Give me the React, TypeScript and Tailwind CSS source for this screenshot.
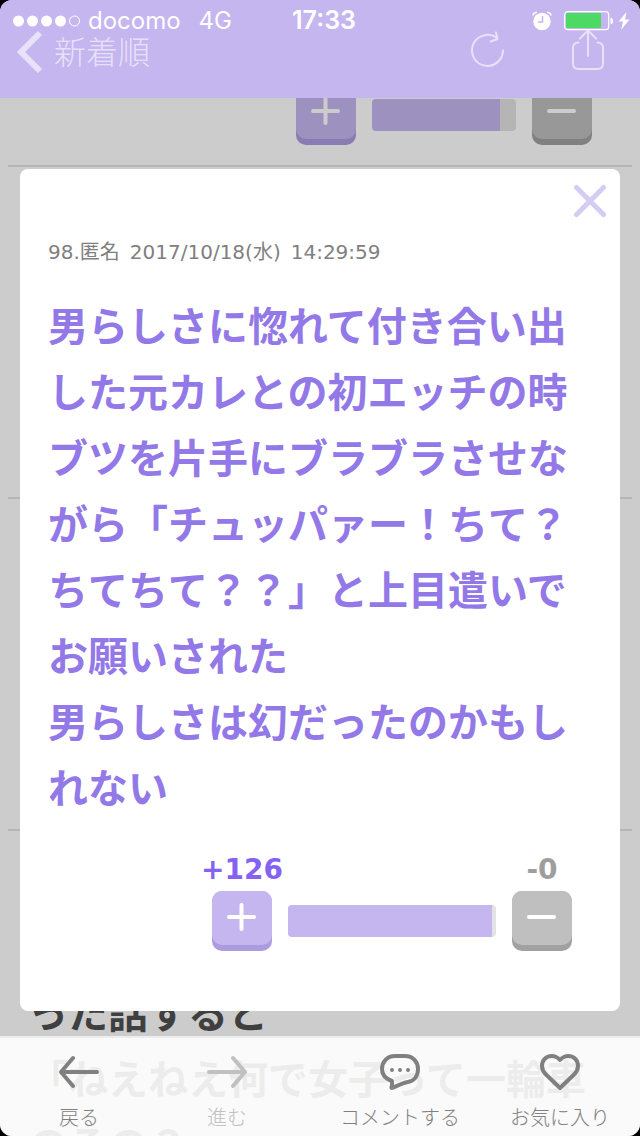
import type { ReactNode } from 'react';

function VoteButton({ kind }: { kind: 'plus' | 'minus' }) {
  const plus = kind === 'plus';
  return (
    <button
      type="button"
      aria-label={plus ? 'プラス' : 'マイナス'}
      className={`flex size-[60px] shrink-0 flex-col rounded-[10px] pb-1.5 ${plus ? 'bg-[#ac9bdf]' : 'bg-[#a1a1a1]'}`}
    >
      <span
        className={`flex w-full flex-1 items-center justify-center rounded-[10px] ${plus ? 'bg-[#c5b6f0]' : 'bg-[#bfbfbf]'}`}
      >
        <svg width="30" height="30" viewBox="0 0 30 30" fill="none" stroke="white" strokeWidth="4" strokeLinecap="round">
          <path d="M2 14H27" />
          {plus && <path d="M14.500 2V26" />}
        </svg>
      </span>
    </button>
  );
}

function VoteBar({ percent }: { percent: number }) {
  return (
    <div className="h-8 flex-1 overflow-hidden rounded bg-[#e3e3e3]">
      <div className="h-full bg-[#c5b6f0]" style={{ width: `${percent}%` }} />
    </div>
  );
}

function VoteRow({ percent }: { percent: number }) {
  return (
    <div className="flex items-center gap-4">
      <VoteButton kind="plus" />
      <VoteBar percent={percent} />
      <VoteButton kind="minus" />
    </div>
  );
}

function StatusBar() {
  return (
    <div className="grid h-10 grid-cols-[1fr_auto_1fr] items-center px-2.5 pt-0.5 text-2xl text-white">
      <div className="flex items-center gap-2 pl-0.5">
        <svg width="68" height="12" viewBox="0 0 68 12" fill="white">
          <circle cx="6.5" cy="6" r="5.5" />
          <circle cx="20.5" cy="6" r="5.5" />
          <circle cx="34.5" cy="6" r="5.5" />
          <circle cx="48.5" cy="6" r="5.5" />
          <circle cx="62.5" cy="6" r="5" fill="none" stroke="white" />
        </svg>
        <span>docomo</span>
        <span className="ml-2.5">4G</span>
      </div>
      <span className="pl-2 text-[25px] font-semibold">17:33</span>
      <div className="flex items-center justify-end gap-1">
        <svg className="mr-2" width="20" height="20" viewBox="0 0 20 20">
          <circle cx="10" cy="10.500" r="8.7" fill="white" />
          <path d="M1 4.500C1 2.500 3 1 5 1.500M19 4.500C19 2.500 17 1 15 1.500" fill="none" stroke="white" strokeWidth="1.500" />
          <path d="M10.500 5V11H6" fill="none" stroke="#c5b6f0" strokeWidth="1.500" />
        </svg>
        <svg width="50" height="20" viewBox="0 0 50 20">
          <rect x="0.700" y="0.700" width="44" height="18" rx="3" fill="none" stroke="white" strokeWidth="1.200" />
          <rect x="2" y="2" width="35" height="15" rx="1" fill="#4cd964" />
          <path d="M46.500 6.500C50 7 50 13 46.500 13.500Z" fill="white" />
        </svg>
        <svg width="12" height="18" viewBox="0 0 12 18" fill="white">
          <path d="M8.500 0L0.500 9.500H5L3 18L11.500 7.500H7Z" />
        </svg>
      </div>
    </div>
  );
}

function Header() {
  return (
    <header className="absolute inset-x-0 top-0 z-20 bg-[#c5b6f0] pb-[25px]">
      <StatusBar />
      <nav className="-mt-[11px] flex h-11 items-center pr-[34px] pl-4">
        <a href="#list" className="flex items-center gap-2.5 text-[32px] leading-11 font-light text-white/60">
          <svg width="28" height="44" viewBox="0 0 28 44" fill="none" stroke="currentColor" strokeWidth="6">
            <path d="M24 4L5 23L24 42" />
          </svg>
          <span className="pt-1">新着順</span>
        </a>
        <button type="button" aria-label="再読み込み" className="ml-auto text-white/60">
          <svg width="36" height="44" viewBox="0 0 36 44" fill="none" stroke="currentColor" strokeWidth="2" strokeLinecap="round" strokeLinejoin="round">
            <path d="M33 21.500A15.500 15.500 0 1 1 27.500 9.500M26 3.500L27.500 10L20.500 12.500" />
          </svg>
        </button>
        <button type="button" aria-label="共有" className="ml-16 text-white/60">
          <svg width="36" height="44" viewBox="0 0 36 44" fill="none" stroke="currentColor" strokeWidth="2" strokeLinecap="round">
            <path d="M8.500 13.500C4.500 13.500 3 15.500 3 19V34.500Q3 40 8.500 40H27.500Q33 40 33 34.500V19C33 15.500 31.500 13.500 27.500 13.500M18 27V1.500M10 9.500L18 1.500L26 9.500" />
          </svg>
        </button>
      </nav>
    </header>
  );
}

function Posts() {
  return (
    <main className="px-2 pt-[85px]">
      <article className="border-b-2 border-[#e3e3e3] pr-10 pb-5">
        <div className="ml-auto w-[296px]">
          <VoteRow percent={89} />
        </div>
      </article>
      <article className="h-[332px] border-b-2 border-[#e3e3e3]" />
      <article className="h-[332px] border-b-2 border-[#e3e3e3]" />
      <article className="px-5 pt-[150px]">
        <p className="text-[40px] leading-[66px] font-bold text-[#4f4f4f]">
          った話すると
          <br />
          「ねえねえ何で女子って一輪車のるの？
        </p>
      </article>
    </main>
  );
}

function CommentDialog() {
  return (
    <section
      role="dialog"
      aria-label="コメント"
      className="absolute inset-x-5 top-[169px] z-10 rounded-lg bg-white px-7 pt-[69px] pb-[60px]"
    >
      <button type="button" aria-label="閉じる" className="absolute top-2 right-1.5 flex size-12 items-center justify-center">
        <svg width="34" height="34" viewBox="0 0 34 34" fill="none" stroke="#d5ccf3" strokeWidth="5" strokeLinecap="round">
          <path d="M3.500 3.500L30.500 30.500M30.500 3.500L3.500 30.500" />
        </svg>
      </button>
      <div className="flex gap-2.5 text-xl leading-7 text-[#808080]">
        <span>98.匿名</span>
        <span>2017/10/18(水)</span>
        <span>14:29:59</span>
      </div>
      <p className="mt-7 text-[40px] leading-[66px] font-bold text-[#9378e8]">
        男らしさに惚れて付き合い出した元カレとの初エッチの時ブツを片手にブラブラさせながら「チュッパァー！ちて？ちてちて？？」と上目遣いでお願いされた
        <br />
        男らしさは幻だったのかもしれない
      </p>
      <div className="mt-8 mr-5 ml-auto w-[360px]">
        <div className="flex h-[37px] justify-between text-[28px] leading-8 font-bold">
          <span className="flex w-[60px] justify-center text-[#8662f3]">+126</span>
          <span className="flex w-[60px] justify-center text-[#9e9e9e]">-0</span>
        </div>
        <VoteRow percent={98} />
      </div>
    </section>
  );
}

function Tab({ label, children, className }: { label: string; children: ReactNode; className: string }) {
  return (
    <button type="button" className={`flex flex-col items-center gap-[17px] whitespace-nowrap ${className}`}>
      <svg width="40" height="36" viewBox="0 0 40 36" fill="none" stroke="currentColor" strokeWidth="4" strokeLinecap="round" strokeLinejoin="round">
        {children}
      </svg>
      <span className="text-xl leading-[22px] font-light">{label}</span>
    </button>
  );
}

function Footer() {
  return (
    <footer className="absolute inset-x-0 bottom-0 z-20 grid h-[100px] grid-cols-[158fr_138fr_208fr_136fr] border-t-2 border-black/5 bg-white/90 pt-4">
      <Tab label="戻る" className="text-[#808080]">
        <path d="M38 18H2M14 4L2 18L14 32" />
      </Tab>
      <Tab label="進む" className="text-[#c0c0c0]">
        <path d="M2 18H38M26 4L38 18L26 32" />
      </Tab>
      <Tab label="コメントする" className="text-[#808080]">
        <path d="M15 2H25C33 2 38 8 38 15C38 22 34 27 28 28C22 29 17 32 12 34C11 34 11.500 33 12 32V27C6 25 2 21 2 15C2 8 7 2 15 2Z" />
        <path d="M12 16H12.010M20 16H20.010M28 16H28.010" />
      </Tab>
      <Tab label="お気に入り" className="pr-6 text-[#808080]">
        <path d="M20 6C17 2.500 14.500 2 11.500 2C6 2 2 6.500 2 12C2 16 3.500 18 6 20.500L20 34L34 20.500C36.500 18 38 16 38 12C38 6.500 34 2 28.500 2C25.500 2 23 2.500 20 6Z" />
      </Tab>
    </footer>
  );
}

export default function App() {
  return (
    <div className="bg-black">
      <div className="relative h-screen overflow-hidden rounded-[12px] bg-white font-['DejaVu_Sans','Noto_Sans_CJK_JP',sans-serif]">
        <Posts />
        <div className="absolute inset-0 bg-black/20" />
        <CommentDialog />
        <div className="contents font-['Inter','Noto_Sans_CJK_JP',sans-serif]">
          <Header />
          <Footer />
        </div>
      </div>
    </div>
  );
}
